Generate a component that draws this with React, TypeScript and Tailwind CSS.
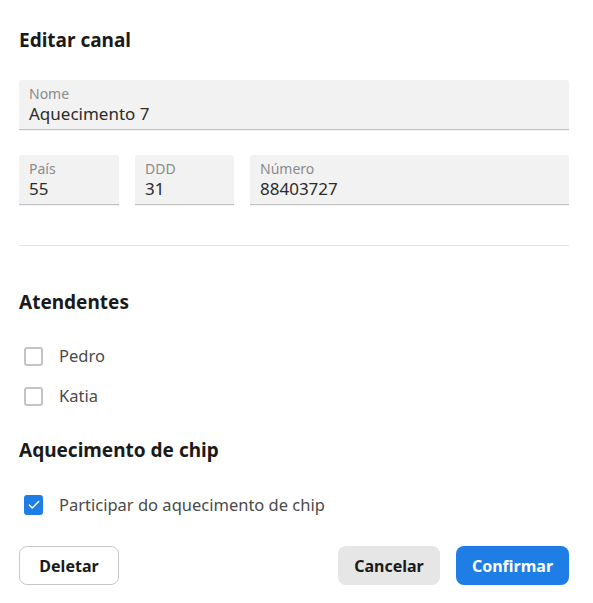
import { Check } from "lucide-react";

function Field({ label, value, className }: { label: string; value: string; className?: string }) {
  return (
    <div
      className={`flex h-[50px] flex-col justify-center rounded-t-[3px] border-b border-[#c2c2c2] bg-[#f2f2f2] px-[10px] shadow-[0_1px_1px_rgba(0,0,0,0.06)] ${className ?? ""}`}
    >
      <span className="text-[14px] leading-[18px] text-[#8a8a8a]">{label}</span>
      <span className="text-[17px] leading-[22px] text-[#2b2b2b]">{value}</span>
    </div>
  );
}

function Checkbox({ label, checked }: { label: string; checked?: boolean }) {
  return (
    <label className="flex h-[40px] items-center gap-[16px] pl-[5px]">
      {checked ? (
        <span className="flex h-[20px] w-[19px] items-center justify-center rounded-[3px] bg-[#1f7de6]">
          <Check className="h-[14px] w-[14px] text-white" strokeWidth={2.5} />
        </span>
      ) : (
        <span className="h-[19px] w-[19px] rounded-[3px] border-2 border-[#c4c4c4] bg-white" />
      )}
      <span className="text-[16.5px] text-[#4a4a4a]">{label}</span>
    </label>
  );
}

export default function App() {
  return (
    <div
      className="h-[603px] w-[593px] bg-white pl-[19px] pr-[24px] pt-[28px] text-[#1a1a1a]"
      style={{ fontFamily: '"Noto Sans", "Open Sans", sans-serif' }}
    >
      {/* Header */}
      <h2 className="text-[19px] font-bold leading-[24px]">Editar canal</h2>

      {/* Channel fields */}
      <Field label="Nome" value="Aquecimento 7" className="mt-[28px]" />
      <div className="mt-[25px] flex gap-[16px]">
        <Field label="País" value="55" className="w-[100px]" />
        <Field label="DDD" value="31" className="w-[99px]" />
        <Field label="Número" value="88403727" className="flex-1" />
      </div>

      <div className="mt-[40px] h-px bg-[#e6e6e6]" />

      {/* Atendentes */}
      <h3 className="mt-[44px] text-[19px] font-bold leading-[24px]">Atendentes</h3>
      <div className="mt-[22px] flex flex-col">
        <Checkbox label="Pedro" />
        <Checkbox label="Katia" />
      </div>

      {/* Aquecimento */}
      <h3 className="mt-[22px] text-[19px] font-bold leading-[24px]">Aquecimento de chip</h3>
      <div className="mt-[23px]">
        <Checkbox label="Participar do aquecimento de chip" checked />
      </div>

      {/* Actions */}
      <div className="mt-[21px] flex items-center">
        <button className="h-[39px] w-[100px] rounded-[8px] border border-[#c8c8c8] bg-white text-[16px] font-bold text-[#1a1a1a]">
          Deletar
        </button>
        <div className="ml-auto flex gap-[16px]">
          <button className="h-[39px] w-[102px] rounded-[8px] bg-[#e6e6e6] text-[16px] font-bold text-[#1a1a1a]">
            Cancelar
          </button>
          <button className="h-[39px] w-[113px] rounded-[8px] bg-[#1f7de6] text-[16px] font-bold text-white">
            Confirmar
          </button>
        </div>
      </div>
    </div>
  );
}
